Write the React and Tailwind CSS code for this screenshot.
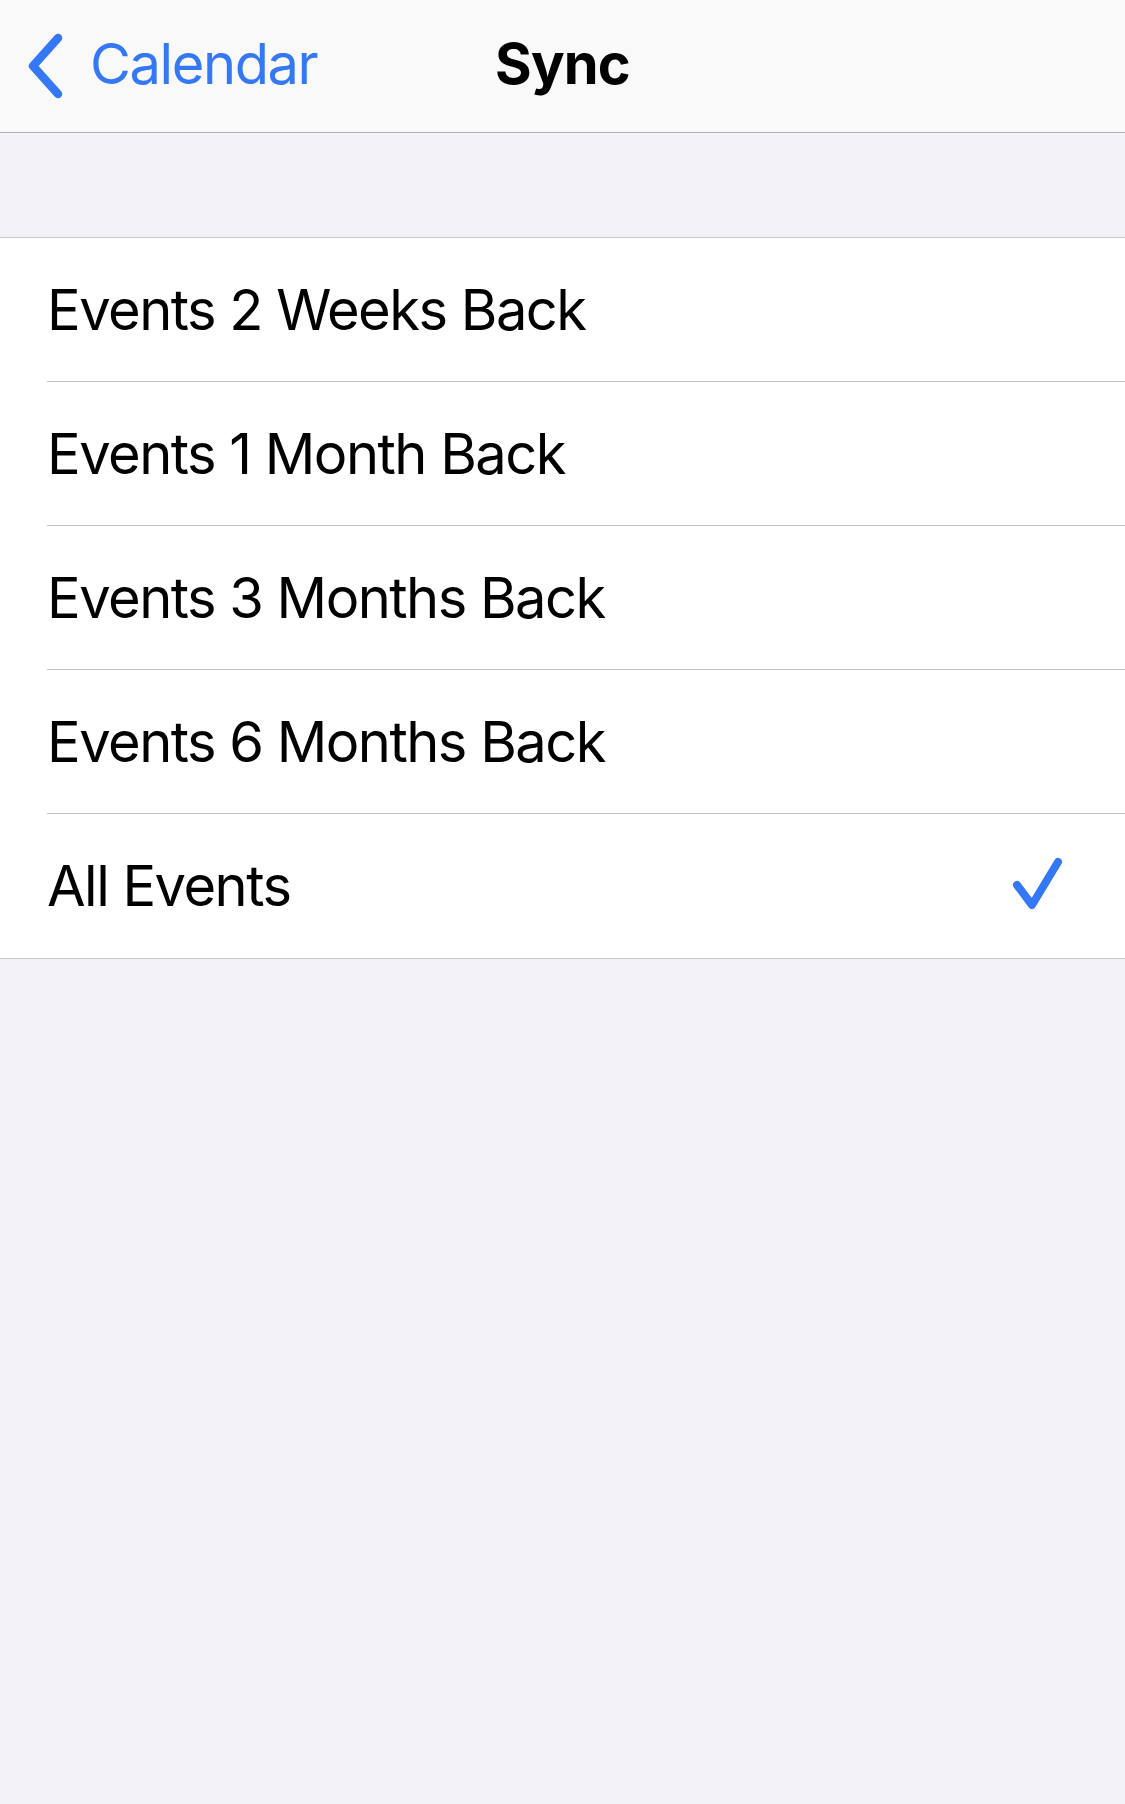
import React from 'react';

const options = [
  'Events 2 Weeks Back',
  'Events 1 Month Back',
  'Events 3 Months Back',
  'Events 6 Months Back',
  'All Events',
];

function Chevron() {
  return (
    <svg width="44" height="66" viewBox="0 0 44 66" fill="none">
      <path d="M36 5 L11 33 L36 61" stroke="#3478f6" strokeWidth="8.5" strokeLinecap="round" strokeLinejoin="round" />
    </svg>
  );
}

function Check() {
  return (
    <svg width="58" height="58" viewBox="0 0 58 58" fill="none">
      <path d="M7 28 L22 48 L48 5" stroke="#3478f6" strokeWidth="8" strokeLinecap="round" strokeLinejoin="round" />
    </svg>
  );
}

export default function App() {
  const selected = 'All Events';

  return (
    <div className="min-h-screen bg-[#f2f2f7] font-['Inter','Liberation_Sans',sans-serif] text-black">
      {/* Nav bar */}
      <div className="h-[133px] bg-[#f9f9f9] border-b border-[#b2b2b2] grid grid-cols-[1fr_auto_1fr] items-center">
        <button className="flex items-center gap-[24px] pl-[22px] text-[#3478f6] text-[56px] tracking-[-0.025em] leading-none">
          <Chevron />
          <span className="-mt-[4px]">Calendar</span>
        </button>
        <h1 className="text-[56px] font-bold tracking-[-0.015em] leading-none -mt-[4px]">Sync</h1>
        <div />
      </div>

      <div className="h-[104px]" />

      {/* Options */}
      <div className="bg-white border-y border-[#c8c7cc]">
        {options.map((opt, i) => (
          <div key={opt} className="pl-[47px]">
            <div
              className={
                'h-[144px] flex items-center justify-between pr-[57px] ' +
                (i < options.length - 1 ? 'border-b border-[#c8c7cc]' : '')
              }
            >
              <span className="text-[56px] tracking-[-0.027em] leading-none">{opt}</span>
              {opt === selected && <Check />}
            </div>
          </div>
        ))}
      </div>
    </div>
  );
}
